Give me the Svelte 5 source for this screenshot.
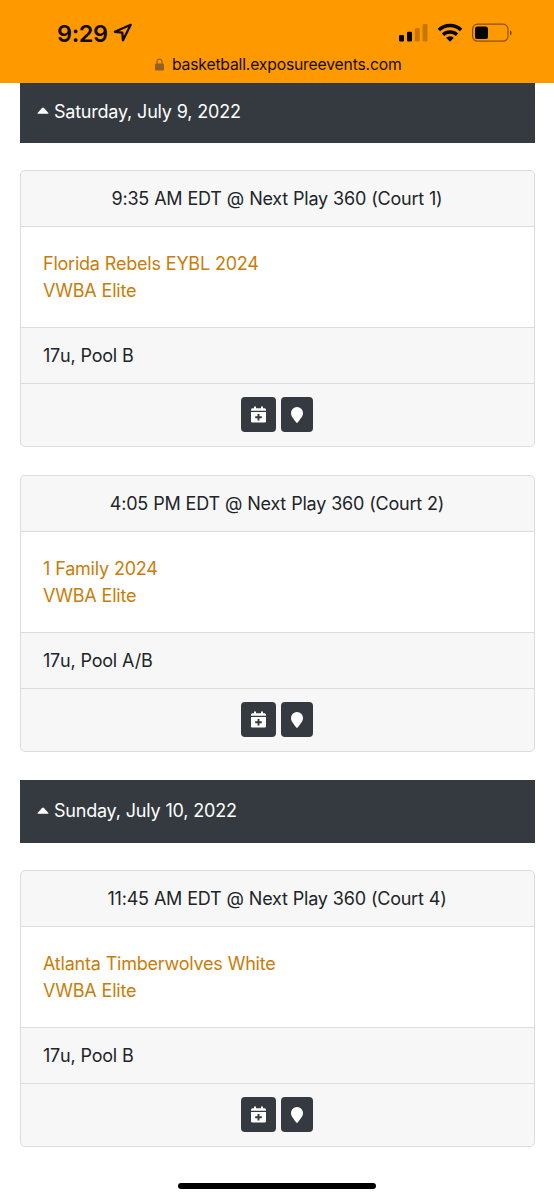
<script>
  const days = [
    {
      date: 'Saturday, July 9, 2022',
      games: [
        { when: '9:35 AM EDT @ Next Play 360 (Court 1)', teams: ['Florida Rebels EYBL 2024', 'VWBA Elite'], pool: '17u, Pool B' },
        { when: '4:05 PM EDT @ Next Play 360 (Court 2)', teams: ['1 Family 2024', 'VWBA Elite'], pool: '17u, Pool A/B' }
      ]
    },
    {
      date: 'Sunday, July 10, 2022',
      games: [
        { when: '11:45 AM EDT @ Next Play 360 (Court 4)', teams: ['Atlanta Timberwolves White', 'VWBA Elite'], pool: '17u, Pool B' }
      ]
    }
  ];
</script>

<div class="screen">
  <header>
    <div class="status">
      <div class="clock">
        <span>9:29</span>
        <svg class="arrow" width="20" height="20" viewBox="0 0 20 20"><path d="M17.7 1.8 1.9 8.8l7.4.9.7 7.6z" fill="none" stroke="#140b00" stroke-width="2.3" stroke-linejoin="round" /></svg>
      </div>
      <div class="indicators">
        <svg width="29" height="20" viewBox="0 0 29 20">
          <rect x="0" y="12" width="5" height="6.5" rx="1.3" />
          <rect x="8" y="8.8" width="5" height="9.7" rx="1.3" />
          <rect x="15.8" y="5" width="5" height="13.5" rx="1.3" opacity=".22" />
          <rect x="23.5" y="1" width="5" height="17.5" rx="1.3" opacity=".22" />
        </svg>
        <svg class="wifi" width="26" height="20" viewBox="0 0 26 20">
          <path d="M1.9 7.1a16 16 0 0 1 22.2 0M6 11.7a10.2 10.2 0 0 1 14 0" fill="none" stroke="#000" stroke-width="3.5" />
          <path d="M9.1 14.8a5.8 5.8 0 0 1 7.8 0L13 18.8z" />
        </svg>
        <svg class="battery" width="41" height="20" viewBox="0 0 41 20">
          <rect x=".6" y="1.2" width="35.4" height="17" rx="5" fill="none" stroke="#000" stroke-opacity=".48" stroke-width="1.2" />
          <rect x="3" y="3.5" width="13" height="12.6" rx="2.6" />
          <path d="M38 7.2c2.2.9 2.2 4.4 0 5.2z" opacity=".5" />
        </svg>
      </div>
    </div>
    <div class="address">
      <svg width="9" height="13" viewBox="0 0 9 13"><rect y="5.5" width="9" height="7" rx="1.2" fill="#936029" /><path d="M2 6V3.6a2.5 2.5 0 0 1 5 0V6" fill="none" stroke="#936029" stroke-width="1.2" /></svg>
      <span>basketball.exposureevents.com</span>
    </div>
  </header>

  <main>
    {#each days as day}
      <h2>
        <svg width="12" height="7" viewBox="0 0 12 7"><path d="M1 6.7h10q1 0 .4-.8L7 1q-1-.9-2 0L.6 5.9Q0 6.7 1 6.7z" fill="#fff" /></svg>
        <span>{day.date}</span>
      </h2>
      {#each day.games as game}
        <article>
          <div class="when">{game.when}</div>
          <div class="teams">
            {#each game.teams as team}<a href="#team">{team}</a>{/each}
          </div>
          <div class="pool">{game.pool}</div>
          <div class="actions">
            <button class="calendar" aria-label="Add to calendar">
              <svg width="15" height="17" viewBox="0 0 15 17">
                <path d="M0 4.8V3.7Q0 2.2 1.5 2.2H3V.5h2v1.7h5V.5h2v1.7h1.5Q15 2.2 15 3.7v1.1z" fill="#fff" />
                <path d="M0 6h15v9.2q0 1.3-1.3 1.3H1.3Q0 16.5 0 15.2z" fill="#fff" />
                <path d="M7.5 8v6.6M4.2 11.3h6.6" stroke="#343a40" stroke-width="1.9" />
              </svg>
            </button>
            <button class="location" aria-label="Show location">
              <svg width="12" height="16" viewBox="0 0 12 16"><path d="M6 0a6 6 0 0 1 6 6c0 2.6-1.1 4-5.3 9.6q-.7.8-1.4 0C1.1 10 0 8.6 0 6a6 6 0 0 1 6-6z" fill="#fff" /></svg>
            </button>
          </div>
        </article>
      {/each}
    {/each}
  </main>
  <div class="home"></div>
</div>

<style>
  :global(body) { margin: 0; background: #fff; }
  .screen { box-sizing: border-box; width: 554px; height: 1200px; overflow: hidden; display: flex; flex-direction: column; background: #fff; font-family: Inter, "Liberation Sans", sans-serif; font-size: 18px; letter-spacing: -.23px; word-spacing: .3px; color: #212529; }
  header { height: 83px; flex: none; background: #ff9900; color: #140b00; }
  .status { height: 52px; padding: 14px 41px 0 57px; box-sizing: border-box; display: flex; justify-content: space-between; }
  .clock { height: 38px; display: flex; gap: 5px; font-size: 23.5px; font-weight: 600; line-height: 39px; letter-spacing: -.4px; }
  .arrow { margin-top: 9px; }
  .indicators { display: flex; padding-top: 9px; }
  .wifi { margin-left: 9px; }
  .battery { margin-left: 9px; }
  .address { display: flex; align-items: center; height: 24px; padding-left: 155px; gap: 8px; font-size: 15.7px; letter-spacing: -.17px; }
  main { padding: 0 19.500px; flex: 1; }
  h2 { height: 63px; margin: 28px 0 27px; padding: 0 17.500px; box-sizing: border-box; display: flex; gap: 5px; background: #343a40; color: #fff; font-size: inherit; font-weight: 400; line-height: 62px; }
  h2 svg { margin-top: 27px; }
  h2:first-child { height: 60px; margin: 0 0 27px; line-height: 57px; }
  h2:first-child svg { margin-top: 24px; }
  article { height: 277px; margin: 0 0 28px; box-sizing: border-box; display: grid; grid-template-rows: 56px 100px 56px 1fr; border: 1px solid #dcdcdc; border-radius: 5px; overflow: hidden; background: #f7f7f7; }
  .when { border-bottom: 1px solid #dcdcdc; text-align: center; line-height: 55px; }
  .teams { display: flex; flex-direction: column; padding: 22.600px 22.500px 0; background: #fff; }
  a { color: #c97d08; text-decoration: none; line-height: 27.4px; }
  .pool { border-top: 1px solid #dcdcdc; padding: 0 22.500px; line-height: 55px; }
  .actions { border-top: 1px solid #dcdcdc; display: flex; justify-content: center; gap: 5px; padding-top: 13px; }
  button { height: 35px; padding: 0; border: 0; border-radius: 4px; background: #343a40; display: flex; align-items: center; justify-content: center; }
  .calendar { width: 35px; }
  .location { width: 32px; }
  .home { flex: none; width: 198px; height: 6px; margin: 0 0 11px 178px; border-radius: 3px; background: #000; }
</style>
